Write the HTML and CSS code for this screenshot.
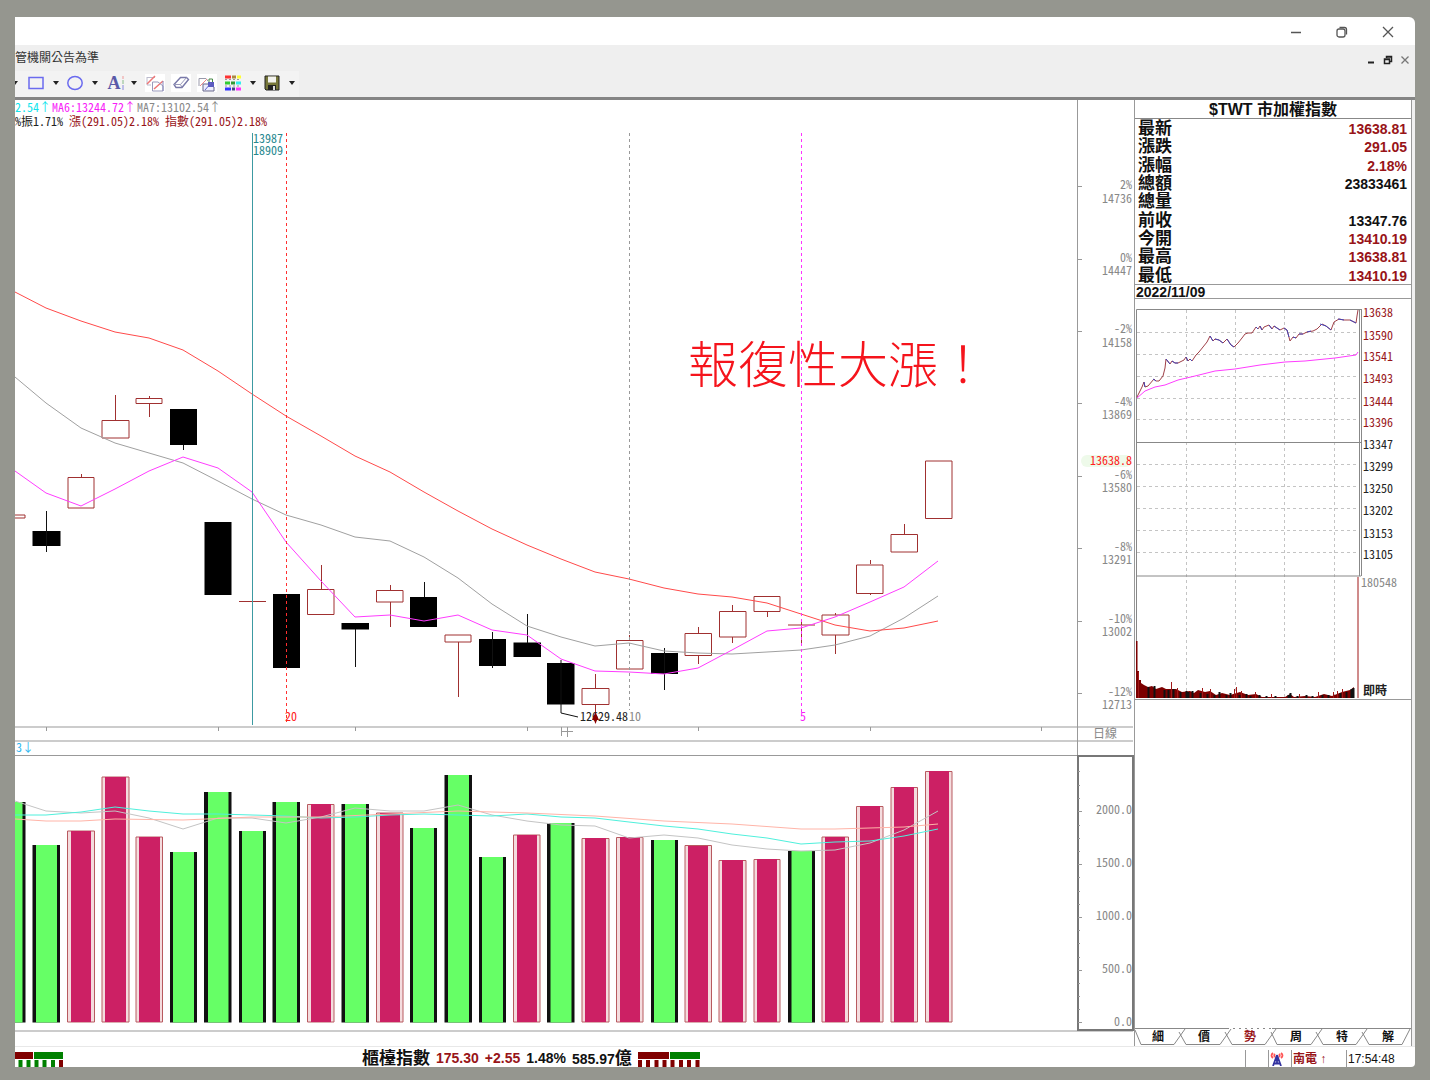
FILE: index.html
```html
<!DOCTYPE html>
<html lang="zh-Hant">
<head>
<meta charset="utf-8">
<meta name="viewport" content="width=device-width, initial-scale=1">
<title>$TWT 市加權指數</title>
<link rel="stylesheet" href="styles.css">
</head>
<body>
<div class="window">
  <header class="titlebar">
    <button class="winbtn" aria-label="最小化"><svg width="14" height="14" viewBox="0 0 14 14"><path d="M2 7.500H12" /></svg></button>
    <button class="winbtn" aria-label="還原"><svg width="14" height="14" viewBox="0 0 14 14"><rect x="2" y="4" width="8" height="8" rx="2"/><path d="M4.500 2.500H9.500Q11.500 2.500 11.500 4.500V9.500"/></svg></button>
    <button class="winbtn" aria-label="關閉"><svg width="14" height="14" viewBox="0 0 14 14"><path d="M2 2L12 12M12 2L2 12"/></svg></button>
  </header>

  <div class="menubar">
    <span>管機關公告為準</span>
    <div class="mdi">
      <button aria-label="最小化視窗"><svg width="10" height="10" viewBox="0 0 10 10"><path d="M2 7.500H8" stroke="#222" stroke-width="2"/></svg></button>
      <button aria-label="還原視窗"><svg width="10" height="10" viewBox="0 0 10 10"><path d="M3.500 3V1.500H8.500V6.500H7M3 2H9" fill="none" stroke="#222" stroke-width="1.500"/><path d="M1.500 4H6.500V8.500H1.500ZM1 4.500H7" fill="none" stroke="#222" stroke-width="1.500"/></svg></button>
      <button aria-label="關閉視窗"><svg width="10" height="10" viewBox="0 0 10 10"><path d="M1.500 1.500L8.500 8.500M8.500 1.500L1.500 8.500" stroke="#777" stroke-width="1.300"/></svg></button>
    </div>
  </div>

  <div class="toolbar">
    <button class="drop drop--cut" aria-label="線條選單"></button>
    <button class="tool" aria-label="矩形"><svg width="18" height="16" viewBox="0 0 18 16"><rect x="2" y="2.500" width="14" height="11" fill="none" stroke="#6b6bef" stroke-width="1.500"/></svg></button>
    <button class="drop" aria-label="矩形選單"></button>
    <button class="tool" aria-label="圓形"><svg width="18" height="16" viewBox="0 0 18 16"><ellipse cx="9" cy="8" rx="7.200" ry="6.500" fill="none" stroke="#6b6bef" stroke-width="1.500"/></svg></button>
    <button class="drop" aria-label="圓形選單"></button>
    <button class="tool tool--text" aria-label="文字">A<svg width="4" height="16" viewBox="0 0 4 16"><path d="M2 1V4" stroke="#e99"/><path d="M2 5V9" stroke="#8b8"/><path d="M2 10V15" stroke="#88d"/></svg></button>
    <button class="drop" aria-label="文字選單"></button>
    <button class="tool tool--first" aria-label="複製線段"><svg class="lit" width="20" height="18" viewBox="0 0 20 18"><path d="M2 3.500H10M2 3V11H6" fill="none" stroke="#bbc" /><path d="M2 10L10 2M9 15L18 7" stroke="#e77" stroke-width="1.500"/><path d="M7.500 8H13L18 12V17H7.500Z" fill="none" stroke="#99b"/><path d="M18 7V17" stroke="#88b"/></svg></button>
    <button class="tool" aria-label="橡皮擦"><svg class="lit" width="20" height="18" viewBox="0 0 20 18"><path d="M3 10.500L9.500 3.500H15.500L17.500 5.500L11 13.500H5Z" fill="#fff" stroke="#7878a8" stroke-width="1.400"/><path d="M3 10.500H9.500L15.500 3.500M9.500 10.500L11 13.500" fill="none" stroke="#9a9aba"/></svg></button>
    <button class="tool" aria-label="鎖定"><svg class="lit" width="20" height="18" viewBox="0 0 20 18"><path d="M2 12V4.500H9L11 7" fill="none" stroke="#99a"/><path d="M3 12L10 5" stroke="#e88"/><path d="M6 10H12L17 13V17H6Z" fill="#eef" stroke="#668"/><rect x="11" y="8" width="6" height="5" fill="#5b5bc0"/><path d="M12 8V5H15.500V8" fill="none" stroke="#484"/><path d="M8 16L14 9" stroke="#66c"/></svg></button>
    <button class="tool" aria-label="色彩"><svg width="18" height="18" viewBox="0 0 18 18"><path d="M1 3H7" stroke="#f33" stroke-width="3"/><path d="M8 3H12" stroke="#a84" stroke-width="3"/><path d="M13 3H17" stroke="#ff3" stroke-width="3"/><path d="M1 9H6" stroke="#3c3" stroke-width="3"/><path d="M7 9H11" stroke="#393" stroke-width="3"/><path d="M12 9H17" stroke="#3ee" stroke-width="3"/><path d="M1 15H7" stroke="#33f" stroke-width="3"/><path d="M8 15H11" stroke="#448" stroke-width="3"/><path d="M12 15H17" stroke="#f3f" stroke-width="3"/><path d="M1 5.500H17M1 12H17" stroke="#999" stroke-dasharray="2 2"/></svg></button>
    <button class="drop" aria-label="色彩選單"></button>
    <button class="tool" aria-label="儲存"><svg width="16" height="16" viewBox="0 0 16 16"><path d="M1 1H15V15H2L1 14Z" fill="#77773a" stroke="#222"/><rect x="4" y="1.500" width="8" height="6" fill="#f2f2ee"/><rect x="4" y="10" width="8" height="5" fill="#222"/><rect x="9" y="11" width="2" height="4" fill="#ddd"/></svg></button>
    <button class="drop" aria-label="儲存選單"></button>
  </div>

  <main class="main">
    <section class="chart">
      <div class="legend">
        <p><span class="cyan">2.54↑</span><span class="magenta">MA6:13244.72↑</span><span class="gray">MA7:13102.54↑</span></p>
        <p><span class="black">%振1.71%</span> <span class="up">漲(291.05)2.18%</span> <span class="up">指數(291.05)2.18%</span></p>
      </div>
      <svg class="plot" viewBox="15 128 1119 904" role="img" aria-label="日線圖">
        <!-- pane frames and time axis -->
        <g class="rule">
          <path d="M15 727H1133M15 741H1133M15 755.500H1077M15 1031H1133M1077.500 128V755"/>
          <path d="M46.500 727V731M218.500 727V731M355.500 727V731M527.500 727V731M698.500 727V731M870.500 727V731M1041.500 727V731"/>
          <path d="M1077 186.500H1082M1077 259.500H1082M1077 331.500H1082M1077 403.500H1082M1077 476.500H1082M1077 548.500H1082M1077 621.500H1082M1077 693.500H1082"/>
          <path d="M561.500 727V736M561 731.500H573M567.500 727V737"/>
        </g>
        <rect class="rule rule--box" x="1078" y="756" width="55" height="274"/>
        <path class="rule" d="M1078 811.500H1082M1078 864.500H1082M1078 917.500H1082M1078 970.500H1082M1078 1022.500H1082M1078 771.500H1080M1078 785.500H1080M1078 798.500H1080M1078 825.500H1080M1078 838.500H1080M1078 851.500H1080M1078 877.500H1080M1078 891.500H1080M1078 904.500H1080M1078 930.500H1080M1078 943.500H1080M1078 957.500H1080M1078 983.500H1080M1078 996.500H1080M1078 1009.500H1080"/>

        <!-- candles -->
        <g class="rise">
          <path d="M15 515H25V518H15M81.500 474V477M68 477.500H94V508H68ZM115.500 395V420M102 420.500H129V438H102ZM149.500 396V398M149.500 404V417M136 398.500H162V403.500H136Z"/>
          <path d="M239 601.500H266M321.500 565V589M307.500 589.500H334V614.500H307.500ZM390.500 585V590M390.500 602V627M376.500 590.500H403V602H376.500ZM458.500 642V697M445 635H471V642H445Z"/>
          <path d="M595.500 674V688M595.500 704V720M582 688.500H609V704.500H582ZM629.500 635V640M616.500 640.500H643V669H616.500ZM698.500 627V633M698.500 656V664M685 633.500H711.500V655.500H685Z"/>
          <path d="M732.500 605V611M732.500 637V643M719.500 611.500H746V637H719.500ZM767.500 612V617M754 596.500H780V611.500H754ZM788 625H815M801.500 622V645M835.500 613V615M835.500 635V654M822 615H849V635H822Z"/>
          <path d="M870.500 560V564M870.500 593V595M856.500 565H883V593.500H856.500ZM904.500 524V534M891 534.500H917.500V552H891ZM925.500 461H952V518.500H925.500Z"/>
        </g>
        <g class="fall">
          <path d="M32.500 531H60.500V546H32.500ZM170 409H197V445H170ZM204.500 522H231.500V595H204.500ZM273 594H300V668H273ZM341.500 623H369V629.500H341.500ZM410 597H437V627H410Z"/>
          <path d="M479 639H506V666H479ZM513.500 642.500H541V657H513.500ZM547 663H574.500V704.500H547ZM651 653H678V674H651Z"/>
          <path d="M46.500 511V552M183.500 445V450M355.500 629V667M424.500 582V597M492.500 632V668M527.500 614V643M561 660V713L578 717M664.500 648V690"/>
        </g>

        <!-- moving averages -->
        <polyline class="line line--gray" points="15,377 46,403 81,428 115,443 149,453 183,463 218,481 252,499 286,515 321,525 355,537 390,541 424,557 458,578 492,604 527,626 561,637 595,646 629,643 664,651 698,653 732,654 767,652 801,650 835,645 870,636 904,618 938,596"/>
        <polyline class="line line--red" points="15,292 46,308 81,321 115,332 149,338 183,350 218,371 252,394 286,416 321,436 355,456 390,472 424,492 458,511 492,529 527,545 561,559 595,572 629,579 664,588 698,594 732,597 767,603 801,614 835,625 870,631 904,628 938,621"/>
        <polyline class="line line--magenta" points="15,471 46,493 81,506 115,489 149,471 183,457 218,468 252,492 286,542 321,581 355,617 390,615 424,621 458,615 492,630 527,635 561,659 595,671 629,672 664,674 698,668 732,650 767,631 801,628 835,617 870,602 904,587 938,561"/>

        <!-- day markers -->
        <path class="cursor" d="M252.500 133V725"/>
        <path class="mark mark--red" d="M286.500 133V722"/>
        <path class="mark mark--gray" d="M629.500 133V710"/>
        <path class="mark mark--magenta" d="M801.500 133V716"/>
        <g class="num teal"><text x="253" y="143">13987</text><text x="253" y="155">18909</text></g>
        <text class="num red" x="285" y="721">20</text>
        <text class="num black" x="580" y="721">12629.48</text>
        <text class="num gray" x="629" y="721">10</text>
        <text class="num magenta" x="800" y="721">5</text>
        <path class="arrow" d="M595.500 712L599 720H597L595.500 724L594 720H592Z"/>
        <text class="note" x="688" y="383">報復性大漲！</text>

        <!-- price axis -->
        <g class="num gray end">
          <text x="1132" y="189">2%</text><text x="1132" y="203">14736</text>
          <text x="1132" y="262">0%</text><text x="1132" y="275">14447</text>
          <text x="1132" y="333">-2%</text><text x="1132" y="347">14158</text>
          <text x="1132" y="406">-4%</text><text x="1132" y="419">13869</text>
          <text x="1132" y="479">-6%</text><text x="1132" y="492">13580</text>
          <text x="1132" y="551">-8%</text><text x="1132" y="564">13291</text>
          <text x="1132" y="623">-10%</text><text x="1132" y="636">13002</text>
          <text x="1132" y="696">-12%</text><text x="1132" y="709">12713</text>
          <text x="1117" y="738">日線</text>
          <text x="1132" y="814">2000.0</text><text x="1132" y="867">1500.0</text><text x="1132" y="920">1000.0</text><text x="1132" y="973">500.0</text><text x="1132" y="1026">0.0</text>
        </g>
        <rect class="tag" x="1081" y="455" width="51" height="12" rx="6"/>
        <text class="num red end" x="1132" y="465">13638.8</text>
        <text class="num sky" x="16" y="752">3↓</text>

        <!-- volume -->
        <g class="vol-up">
          <path d="M67.500 1022V831H94.500V1022ZM102 1022V777H129V1022ZM136 1022V837H162.500V1022ZM307.500 1022V804.500H334V1022ZM376.500 1022V813H403V1022ZM513.500 1022V835H540V1022ZM582 1022V838.500H609V1022ZM616.500 1022V837.500H643V1022ZM685 1022V845.500H711.500V1022ZM719 1022V860.500H746V1022ZM754 1022V859.500H780V1022ZM822 1022V837H848.500V1022ZM856.500 1022V806.500H883V1022ZM891 1022V787.500H917.500V1022ZM925.500 1022V771.500H952V1022Z"/>
        </g>
        <g class="vol-up-core">
          <path d="M71 1022V831H91V1022ZM105 1022V777H126V1022ZM139 1022V837H160V1022ZM311 1022V804H331V1022ZM380 1022V813H400V1022ZM517 1022V835H537V1022ZM585 1022V838H606V1022ZM620 1022V837H640V1022ZM688 1022V846H708V1022ZM722 1022V860H743V1022ZM757 1022V859H777V1022ZM825 1022V837H845V1022ZM860 1022V806H880V1022ZM894 1022V787H914V1022ZM929 1022V771H949V1022Z"/>
        </g>
        <g class="vol-down">
          <path d="M15 802H25.500V1022.500H15ZM32.500 845H60V1022.500H32.500ZM170 852H197V1022.500H170ZM204 792H231.500V1022.500H204ZM239 831H266V1022.500H239ZM272.500 802H300V1022.500H272.500ZM341.500 804H369V1022.500H341.500ZM410 828H437V1022.500H410ZM444.500 775H472V1022.500H444.500ZM479 857H506V1022.500H479ZM547 823H574.500V1022.500H547ZM651 840H678V1022.500H651ZM788 851H815V1022.500H788Z"/>
        </g>
        <g class="vol-down-core">
          <path d="M15 802H22.500V1022.500H15ZM36 845H57V1022.500H36ZM173 852H194V1022.500H173ZM208 792H228.500V1022.500H208ZM242 831H263V1022.500H242ZM276 802H297V1022.500H276ZM345 804H366V1022.500H345ZM413 828H434V1022.500H413ZM448 775H469V1022.500H448ZM482 857H503V1022.500H482ZM550.500 823H571.500V1022.500H550.500ZM654 840H675V1022.500H654ZM791.500 851H812V1022.500H791.500Z"/>
        </g>
        <polyline class="line line--silver" points="15,801 46,811 81,813 115,811 149,818 183,829 218,818 252,818 286,823 321,817 355,808 390,811 424,811 458,805 492,815 527,821 561,825 595,826 629,838 664,835 698,838 732,845 767,849 801,851 835,850 870,843 904,830 938,811"/>
        <polyline class="line line--aqua" points="15,815 46,815 81,812 115,807 149,811 183,814 218,814 252,815 286,816 321,818 355,817 390,815 424,814 458,815 492,816 527,814 561,817 595,818 629,822 664,826 698,829 732,834 767,838 801,844 835,842 870,841 904,836 938,829"/>
        <polyline class="line line--salmon" points="15,819 46,821 81,821 115,819 183,820 252,817 321,817 390,814 458,811 527,813 595,816 664,821 732,824 801,829 835,829 904,827 938,824"/>
      </svg>
    </section>

    <aside class="side">
      <h1 class="side-title">$TWT 市加權指數</h1>
      <table class="quote">
        <tr><th scope="row">最新</th><td class="up">13638.81</td></tr>
        <tr><th scope="row">漲跌</th><td class="up">291.05</td></tr>
        <tr><th scope="row">漲幅</th><td class="up">2.18%</td></tr>
        <tr><th scope="row">總額</th><td>23833461</td></tr>
        <tr><th scope="row">總量</th><td></td></tr>
        <tr><th scope="row">前收</th><td>13347.76</td></tr>
        <tr><th scope="row">今開</th><td class="up">13410.19</td></tr>
        <tr><th scope="row">最高</th><td class="up">13638.81</td></tr>
        <tr><th scope="row">最低</th><td class="up">13410.19</td></tr>
      </table>
      <p class="date">2022/11/09</p>
      <svg class="mini" viewBox="1135 299 276 400" role="img" aria-label="即時走勢">
        <path class="grid" d="M1186.500 310V698M1235.500 310V698M1284.500 310V698M1334.500 310V698M1137 332.500H1360M1137 354.500H1360M1137 376.500H1360M1137 398.500H1360M1137 419.500H1360M1137 464.500H1360M1137 486.500H1360M1137 508.500H1360M1137 530.500H1360M1137 552.500H1360"/>
        <path class="rule rule--dark" d="M1136.500 698V309.500H1361M1359.500 309V576M1136 442.500H1361M1136 576H1361M1361.500 309V576"/>
        <polyline class="line line--magenta" points="1137,398 1145,391 1155,387 1165,385 1178,380 1195,376 1215,371 1235,369 1260,365 1285,362 1305,361 1335,358 1356,355 1358,352"/>
        <polyline class="tick-up" points="1137,397 1140,391 1142,387 1144,382 1145,387 1148,386 1154,379 1156,381 1159,381 1163,376 1165,368 1166,359 1170,364 1172,361 1175,363 1178,363 1184,360 1186,357 1188,361 1190,359 1192,361 1196,355 1199,352 1203,347 1207,342 1210,336 1213,341 1215,339 1219,340 1223,343 1227,339 1231,345 1234,347 1238,343 1242,338 1245,334 1248,333 1252,333 1256,327 1258,329 1260,326 1262,330 1264,327 1269,325 1272,329 1274,326 1277,328 1280,330 1284,328 1287,330 1290,341 1293,337 1296,338 1299,334 1303,334 1307,332 1313,331 1317,329 1322,324 1326,326 1331,330 1334,322 1339,319 1344,320 1350,320 1356,323 1357,316 1358,310"/>
        <path class="tick-down" d="M1144 382L1145 387M1153 379L1156 381M1166 359L1170 364M1172 361L1175 363H1178M1186 357L1188 361M1190 359L1192 361M1210 336L1213 341M1215 339L1219 340L1223 343M1227 339L1231 345L1234 347M1256 327L1258 329M1260 326L1262 330M1269 325L1272 329M1274 326L1280 330M1284 328L1287 330L1289 337M1293 337L1296 338M1299 334H1303M1307 332L1311 331M1320 324L1326 326L1331 330M1338 319L1344 320M1350 320L1356 323"/>
        <path class="minute-area" d="M1136 698V641H1137.500V671H1139V680H1141V683L1144 685L1148 687L1152 686L1156 689L1162 687L1166 689H1176L1182 692L1190 691L1194 693L1198 690L1205 692L1210 691L1216 695L1222 693L1230 695L1240 692L1248 695L1256 694L1262 697H1285L1290 694L1294 697L1305 696L1315 697L1324 694L1332 696L1342 692L1350 690L1354 687V698Z"/>
        <path class="minute-up" d="M1171.500 698V682M1177.500 698V688M1138.500 672V698M1202.500 698V688M1210.500 698V689M1234.500 698V689M1236.500 698V687M1241.500 698V691M1255.500 698V692M1271.500 698V694M1299.500 698V694M1318.500 698V692M1333.500 698V692M1337.500 698V691M1342.500 698V689M1358 698V577"/>
        <path class="minute-down" d="M1148.500 698V687M1154.500 698V686M1164.500 698V690M1168.500 698V690M1173.500 698V689M1180.500 698V692M1186.500 698V691M1188.500 698V692M1192.500 698V691M1200.500 698V693M1207.500 698V694M1214.500 698V695M1219.500 698V692M1226.500 698V695M1230.500 698V693M1239.500 698V695M1246.500 698V694M1250.500 698V696M1259.500 698V695M1266.500 698V696M1275.500 698V696M1288.500 698V695M1290.500 698V693M1297.500 698V696M1306.500 698V695M1312.500 698V696M1322.500 698V695M1328.500 698V695M1340.500 698V693M1346.500 698V692M1351.500 698V689M1353.500 698V688"/>
        <g class="num up">
          <text x="1363" y="317">13638</text><text x="1363" y="340">13590</text><text x="1363" y="361">13541</text><text x="1363" y="383">13493</text><text x="1363" y="406">13444</text><text x="1363" y="427">13396</text>
        </g>
        <g class="num black">
          <text x="1363" y="449">13347</text><text x="1363" y="471">13299</text><text x="1363" y="493">13250</text><text x="1363" y="515">13202</text><text x="1363" y="538">13153</text><text x="1363" y="559">13105</text>
          <text class="bold" x="1363" y="695">即時</text>
        </g>
        <text class="num gray" x="1361" y="587">180548</text>
      </svg>
      <div class="side-blank"></div>
      <nav class="tabs">
        <svg class="tabs-edge" viewBox="0 0 276 18" preserveAspectRatio="none" aria-hidden="true"><path d="M0 .500H92M137 .500H276M0 2L6 16.500H39L50 1M44 4L51 16.500H85L96 1M90 4L97 16.500H130L141 1M136 4L142 16.500H176L187 1M181 4L188 16.500H221L232 1M227 4L234 16.500H267L275 1"/><path d="M92 .500H137" stroke-dasharray="2 4"/></svg>
        <button>細</button><button>價</button><button class="up">勢</button><button>周</button><button>特</button><button>解</button>
      </nav>
    </aside>
  </main>

  <footer class="status">
    <div class="status-left">
      <svg width="48" height="15" viewBox="0 0 48 15" aria-hidden="true"><path d="M0 3.500H18" stroke="#800000" stroke-width="7"/><path d="M19 3.500H48" stroke="#008000" stroke-width="7"/><path d="M5.500 8V15M13.500 8V15M21.500 8V15M29.500 8V15M38 8V15" stroke="#008000" stroke-width="4"/><path d="M46 8V15" stroke="#800000" stroke-width="4"/></svg>
    </div>
    <div class="index">
      <span class="index-name">櫃檯指數</span>
      <span class="up">175.30</span>
      <span class="up">+2.55</span>
      <span>1.48%</span>
      <span>585.97<span class="index-name">億</span></span>
      <svg width="62" height="15" viewBox="0 0 62 15" aria-hidden="true"><path d="M0 3.500H31" stroke="#800000" stroke-width="7"/><path d="M32 3.500H62" stroke="#008000" stroke-width="7"/><path d="M2 8V15M10 8V15M18.500 8V15M26.500 8V15M34.500 8V15M43 8V15M51 8V15M59.500 8V15" stroke="#800000" stroke-width="4"/></svg>
    </div>
    <div class="cell cell--icon"></div>
    <div class="cell cell--icon"><svg width="14" height="14" viewBox="0 0 14 14" aria-hidden="true"><path d="M3 1Q0 3.500 3 6M11 1Q14 3.500 11 6M5 2Q3.500 3.500 5 5M9 2Q10.500 3.500 9 5" fill="none" stroke="#f55" stroke-width="1.800"/><path d="M7 3L3 14M7 3L11 14M5.500 8H8.500M4 11.500H10M7 4V12" fill="none" stroke="#3333a0" stroke-width="1.800"/></svg></div>
    <div class="cell cell--news up">南電 ↑</div>
    <div class="cell cell--time">17:54:48</div>
  </footer>
</div>
</body>
</html>
```

FILE: styles.css
```css
* { box-sizing: border-box; }

body {
  margin: 0;
  min-height: 100vh;
  padding: 17px 15px 13px;
  background: #95968f;
  color: #111;
  font: 12px/14px "Liberation Sans", "Noto Sans CJK TC", sans-serif;
}

p, h1 { margin: 0; }

button {
  padding: 0;
  border: 0;
  background: none;
  color: inherit;
  font: inherit;
}

svg { display: block; }

.window {
  display: flex;
  flex-direction: column;
  min-height: calc(100vh - 30px);
  overflow: hidden;
  background: #fff;
  border-radius: 0 6px 4px 0;
}

/* title bar */
.titlebar {
  display: flex;
  justify-content: flex-end;
  height: 28px;
  padding-right: 4px;
}

.winbtn {
  display: grid;
  place-items: center;
  width: 46px;
  height: 30px;
}

.winbtn svg { fill: none; stroke: #555; stroke-width: 1.3; }

.menubar {
  display: flex;
  justify-content: space-between;
  height: 26px;
  padding: 6px 5px 0 0;
  background: #efefef;
  color: #333;
}

.mdi { display: flex; gap: 7px; padding-top: 4px; }
.mdi button { width: 10px; height: 10px; }

/* drawing tools */
.toolbar {
  display: flex;
  align-items: center;
  height: 26px;
  padding-bottom: 2px;
  background: linear-gradient(90deg, #f3f3f3 284px, #efefef 284px);
}

.tool {
  display: flex;
  align-items: center;
  justify-content: center;
  width: 26px;
  height: 24px;
}

.tool--text { color: #5a5aa8; font: bold 18px/20px "Liberation Serif", serif; padding-left: 4px; }
.tool--first { margin-left: 2px; }
.lit { background: #fff; }

.drop { width: 13px; height: 24px; display: grid; place-items: center; }
.drop::before {
  content: "";
  border: 3px solid transparent;
  border-top: 4px solid #222;
  border-bottom: 0;
}
.drop--cut { width: 8px; justify-content: start; }
.drop--cut::before { border-left: 0; }

/* chart */
.main {
  display: grid;
  grid-template-columns: 1fr 281px;
  flex: 1;
  border-top: 3px solid #858585;
}

.legend {
  height: 28px;
  margin-right: 56px;
  border-right: 1px solid #999;
}

.legend, .num {
  font-family: "Noto Sans CJK TC", "Liberation Sans", sans-serif;
  font-size: 12px;
  font-feature-settings: "hwid";
}

.legend p { line-height: 14px; white-space: nowrap; }
.legend .cyan, .legend .magenta { margin-right: 1px; }

.plot, .mini { width: 100%; height: auto; }

.rule { fill: none; stroke: #999; stroke-width: 1; }
.rule--box { stroke: #777; stroke-width: 2; }
.rule--dark { stroke: #888; }

.rise { fill: none; stroke: #a03030; stroke-width: 1; }
.fall { fill: #000; stroke: none; }
.fall path:last-child { fill: none; stroke: #111; }

.line { fill: none; stroke-width: 1; }
.line--gray { stroke: #a0a0a0; }
.line--red { stroke: #ff4a4a; }
.line--magenta { stroke: #ff3cff; }
.line--silver { stroke: #c4c4c4; }
.line--aqua { stroke: #4ff0dc; }
.line--salmon { stroke: #ffb4a8; }

.cursor { stroke: #3c9aa2; stroke-width: 1; }
.mark { stroke-width: 1; stroke-dasharray: 3 3; }
.mark--red { stroke: #ff3030; }
.mark--gray { stroke: #999; }
.mark--magenta { stroke: #ff30ff; }
.arrow { fill: #8b0000; }

.vol-up { fill: #f4dcde; stroke: #b85a60; }
.vol-up-core { fill: #cc2064; }
.vol-down { fill: #111; }
.vol-down-core { fill: #66ff66; }

.note {
  fill: #f5141c;
  font: 300 50px "Noto Sans CJK TC", sans-serif;
}

.end { text-anchor: end; }
.bold { font-weight: 700; }
.tag { fill: #eefaea; }

.black { color: #222; fill: #222; }
.gray { color: #888; fill: #888; }
.red { color: #ff2020; fill: #ff2020; }
.up { color: #981418; fill: #981418; }
.cyan { color: #10e4ec; }
.sky { fill: #30b8f0; }
.magenta { color: #f81cf8; fill: #f81cf8; }
.teal { fill: #27888f; }

/* quote panel */
.side {
  display: flex;
  flex-direction: column;
  margin-right: 3px;
  border: solid #999;
  border-width: 0 1px;
  box-shadow: 3px 0 #f0f0f0;
}

.side-title {
  height: 19px;
  border-bottom: 1px solid #888;
  font: bold 16px/20px "Liberation Sans", "Noto Sans CJK TC", sans-serif;
  text-align: center;
}

.quote {
  height: 165px;
  border-collapse: collapse;
  font-weight: 700;
}

.quote th {
  padding: 2px 0 0 3px;
  text-align: left;
  font-size: 17px;
  line-height: 16px;
}

.quote td {
  padding: 2px 4px 0 0;
  text-align: right;
  font-size: 14px;
  line-height: 16px;
}

.date {
  height: 15px;
  padding-left: 1px;
  border: solid #999;
  border-width: 1px 0;
  font-size: 14px;
  font-weight: 700;
  line-height: 14px;
}

.grid { stroke: #c4c4c4; stroke-dasharray: 3 3; }
.tick-up { fill: none; stroke: #a04048; }
.tick-down { fill: none; stroke: #4444b8; }
.minute-area { fill: #7c0000; }
.minute-up { stroke: #a01818; }
.minute-down { stroke: #111; stroke-width: 2; }

.side-blank { flex: 1; border-top: 1px solid #999; }

.tabs {
  position: relative;
  display: flex;
  height: 18px;
  padding-bottom: 1px;
}

.tabs-edge {
  position: absolute;
  inset: 0;
  width: 100%;
  height: 100%;
  fill: none;
  stroke: #888;
}

.tabs button { flex: 1; font-weight: 700; line-height: 16px; }

/* status bar */
.status {
  display: grid;
  grid-template-columns: 347px 1fr 23px 23px 55px 69px;
  height: 21px;
  border-top: 1px solid #e8e8e8;
}

.status-left { padding-top: 5px; }

.index {
  display: flex;
  gap: 6px;
  font-size: 14px;
  font-weight: 700;
  line-height: 23px;
  white-space: nowrap;
}

.index-name { font-size: 17px; }
.index svg { margin-top: 5px; }

.cell {
  margin-top: 3px;
  padding-left: 1px;
  border-left: 1px solid #999;
  line-height: 18px;
}

.cell--icon { padding: 2px 0 0 1px; }
.cell--news { font-weight: 700; }
```
